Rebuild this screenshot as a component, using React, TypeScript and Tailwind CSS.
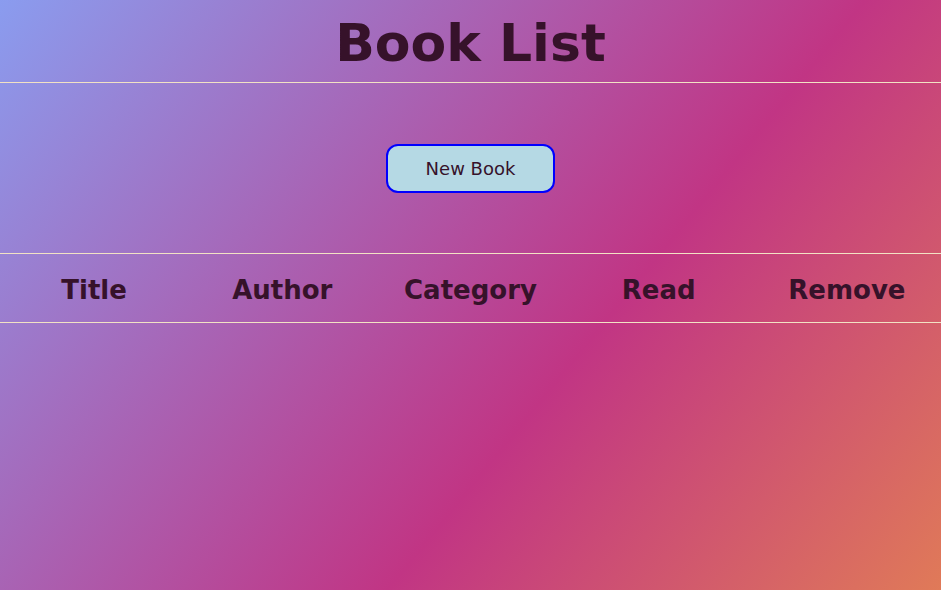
const columns = ['Title', 'Author', 'Category', 'Read', 'Remove'];

export default function App() {
  return (
    <div className="flex h-[590px] w-[944px] overflow-hidden bg-white">
      <div
        className="flex h-full w-[941px] flex-col bg-[linear-gradient(129deg,#8a9cef_0%,#c13584_61%,#e07a58_100%)] text-[#36122a]"
        style={{ fontFamily: '"Comic Sans MS", "DejaVu Sans", sans-serif' }}
      >
        {/* Header */}
        <header className="flex h-[83px] items-center justify-center border-b border-[#f2e2c4] pt-1">
          <h1 className="text-[52px] font-bold leading-none">Book List</h1>
        </header>

        {/* Actions */}
        <section className="flex h-[171px] items-center justify-center border-b border-[#f2e2c4]">
          <button className="h-[49px] w-[169px] rounded-[12px] border-2 border-[#0000ff] bg-[#b5d9e4] text-[18px] text-[#36122a]">
            New Book
          </button>
        </section>

        {/* Table head */}
        <div className="grid h-[69px] grid-cols-5 items-center border-b border-[#f2e2c4] pt-1">
          {columns.map((c) => (
            <div key={c} className="text-center text-[26px] font-bold">
              {c}
            </div>
          ))}
        </div>
      </div>
    </div>
  );
}
